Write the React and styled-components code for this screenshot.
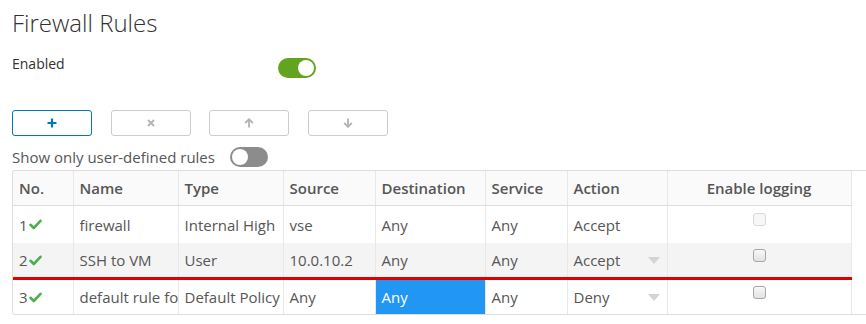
import styled, { createGlobalStyle } from "styled-components";

const GlobalStyle = createGlobalStyle`
  body {
    margin: 0;
    background: #fff;
    font-family: "Open Sans", "Liberation Sans", sans-serif;
    color: #565656;
  }
`;

const rules = [
  { no: 1, name: "firewall", type: "Internal High", source: "vse", dest: "Any", service: "Any", action: "Accept", disabled: true, h: 37 },
  { no: 2, name: "SSH to VM", type: "User", source: "10.0.10.2", dest: "Any", service: "Any", action: "Accept", hover: true, select: true, h: 34 },
  { no: 3, name: "default rule for ingress traffic", type: "Default Policy", source: "Any", dest: "Any", service: "Any", action: "Deny", select: true, selectedDest: true, h: 34 },
];

const cols = [60, 105, 105, 92, 110, 82, 100, 184];

function Check() {
  return (
    <svg width="13" height="11" viewBox="0 0 13 11">
      <path d="M1.5 5.8 L4.8 9 L11.5 1.8" fill="none" stroke="#4bb04f" strokeWidth="2.6" strokeLinecap="round" strokeLinejoin="round" />
    </svg>
  );
}

function Caret() {
  return (
    <svg width="12" height="7" viewBox="0 0 12 7">
      <path d="M0 0 H12 L6 7 Z" fill="#d4d4d4" />
    </svg>
  );
}

function App() {
  return (
    <Page>
      <GlobalStyle />
      <Title>Firewall Rules</Title>
      <EnabledRow>
        <Label>Enabled</Label>
        <Switch $on />
      </EnabledRow>
      <Toolbar>
        <Btn $primary>
          <svg width="10" height="10" viewBox="0 0 10 10">
            <path d="M5 0.5 V9.5 M0.5 5 H9.5" stroke="#0079b8" strokeWidth="2.2" />
          </svg>
        </Btn>
        <Btn>
          <svg width="8" height="8" viewBox="0 0 8 8">
            <path d="M1 1 L7 7 M7 1 L1 7" stroke="#b3b3b3" strokeWidth="1.8" />
          </svg>
        </Btn>
        <Btn>
          <svg width="10" height="10" viewBox="0 0 10 10">
            <path d="M5 9.5 V1.5 M1.2 5 L5 1.2 L8.8 5" fill="none" stroke="#b3b3b3" strokeWidth="1.8" />
          </svg>
        </Btn>
        <Btn>
          <svg width="10" height="10" viewBox="0 0 10 10">
            <path d="M5 0.5 V8.5 M1.2 5 L5 8.8 L8.8 5" fill="none" stroke="#b3b3b3" strokeWidth="1.8" />
          </svg>
        </Btn>
      </Toolbar>
      <FilterRow>
        <span>Show only user-defined rules</span>
        <Switch />
      </FilterRow>
      <Grid>
        <Table>
          <colgroup>
            {cols.map((w, i) => (
              <col key={i} style={{ width: w }} />
            ))}
          </colgroup>
          <thead>
            <tr>
              <Th>No.</Th>
              <Th>Name</Th>
              <Th>Type</Th>
              <Th>Source</Th>
              <Th>Destination</Th>
              <Th>Service</Th>
              <Th>Action</Th>
              <Th $center>Enable logging</Th>
            </tr>
          </thead>
          <tbody>
            {rules.map((r) => (
              <Row key={r.no} $hover={r.hover} $marker={r.no === 2} $h={r.h}>
                <Td>
                  <NoCell>
                    {r.no}
                    <Check />
                  </NoCell>
                </Td>
                <Td>
                  <Clip>{r.name}</Clip>
                </Td>
                <Td>{r.type}</Td>
                <Td>{r.source}</Td>
                <Td $selected={r.selectedDest}>{r.dest}</Td>
                <Td>{r.service}</Td>
                <Td>
                  <ActionCell>
                    {r.action}
                    {r.select && <Caret />}
                  </ActionCell>
                </Td>
                <Td $center>
                  <Box $disabled={r.disabled} />
                </Td>
              </Row>
            ))}
          </tbody>
        </Table>
      </Grid>
    </Page>
  );
}

export default App;

const Page = styled.div`
  padding: 9px 0 0 12px;
  width: 854px;
`;

const Title = styled.h1`
  margin: 0;
  font-family: "Open Sans", sans-serif;
  font-weight: 300;
  font-size: 24px;
  line-height: 28px;
  color: #313131;
`;

const EnabledRow = styled.div`
  display: flex;
  align-items: flex-start;
  margin-top: 20px;
  height: 53px;
`;

const Label = styled.div`
  width: 266px;
  font-size: 14px;
  line-height: 14px;
  color: #313131;
`;

const Switch = styled.span`
  position: relative;
  display: inline-block;
  width: 38px;
  height: 20px;
  border-radius: 10px;
  box-sizing: border-box;
  margin-top: ${(p) => (p.$on ? "1px" : "0")};
  background: ${(p) => (p.$on ? "#62a420" : "#8c8c8c")};

  &::after {
    content: "";
    position: absolute;
    top: 2px;
    left: ${(p) => (p.$on ? "20px" : "2px")};
    width: 16px;
    height: 16px;
    border-radius: 50%;
    background: #fff;
  }
`;

const Toolbar = styled.div`
  display: flex;
  gap: 18.7px;
  height: 26px;
`;

const Btn = styled.button`
  display: flex;
  align-items: center;
  justify-content: center;
  width: 80px;
  height: 26px;
  padding: 0;
  border-radius: 3px;
  background: #fff;
  border: 1px solid ${(p) => (p.$primary ? "#0079b8" : "#cccccc")};
`;

const FilterRow = styled.div`
  display: flex;
  align-items: center;
  gap: 15px;
  margin-top: 11px;
  height: 20px;
  font-size: 15px;
  color: #565656;
`;

const Grid = styled.div`
  margin-top: 3px;
  border: 1px solid #dddddd;
  border-right: none;
  border-radius: 3px 0 0 3px;
  overflow: hidden;
`;

const Table = styled.table`
  border-collapse: collapse;
  table-layout: fixed;
  width: 838px;
  font-size: 15px;
`;

const Th = styled.th`
  height: 34px;
  padding: 0 6px;
  text-align: ${(p) => (p.$center ? "center" : "left")};
  font-weight: 600;
  color: #565656;
  background: #fafafa;
  border-bottom: 1px solid #dddddd;
  border-right: 1px solid #e8e8e8;
  white-space: nowrap;
  overflow: hidden;
`;

const Row = styled.tr`
  background: ${(p) => (p.$hover ? "#f4f4f4" : "#fff")};

  & > td {
    height: ${(p) => p.$h}px;
    border-bottom: ${(p) => (p.$marker ? "3px solid #e00000" : "none")};
  }
`;

const Td = styled.td`
  padding: 0 6px;
  text-align: ${(p) => (p.$center ? "center" : "left")};
  border-right: 1px solid #e8e8e8;
  white-space: nowrap;
  color: ${(p) => (p.$selected ? "#fff" : "#565656")};
  background: ${(p) => (p.$selected ? "#2196f3" : "transparent")};
  vertical-align: middle;
`;

const Clip = styled.div`
  margin-right: -6px;
  overflow: hidden;
  white-space: nowrap;
`;

const NoCell = styled.span`
  display: inline-flex;
  align-items: center;
  gap: 1px;
`;

const ActionCell = styled.div`
  display: flex;
  align-items: center;
  justify-content: space-between;
  padding-right: 1px;
`;

const Box = styled.span`
  display: inline-block;
  width: 13px;
  height: 13px;
  box-sizing: border-box;
  margin-bottom: 6px;
  border-radius: 3px;
  border: 1px solid ${(p) => (p.$disabled ? "#d8d8d8" : "#a6a6a6")};
  background: ${(p) =>
    p.$disabled ? "#f7f7f7" : "linear-gradient(#f8f8f8, #e2e2e2)"};
`;
